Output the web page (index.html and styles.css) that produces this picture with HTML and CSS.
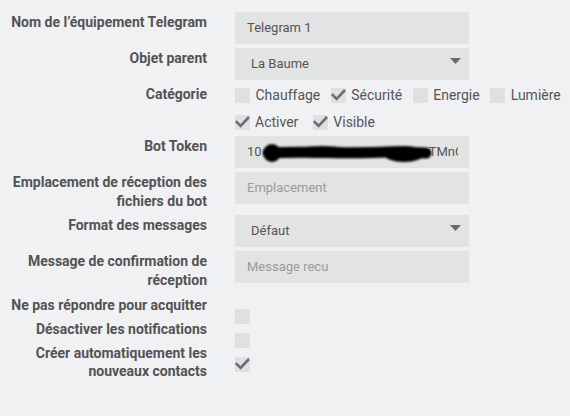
FILE: index.html
```html
<!DOCTYPE html>
<html lang="fr">
<head>
<meta charset="utf-8">
<title>Telegram</title>
<link rel="stylesheet" href="styles.css">
</head>
<body>
<div class="form">
  <div class="label">Nom de l’équipement Telegram</div>
  <div class="control"><div class="input">Telegram 1</div></div>

  <div class="label">Objet parent</div>
  <div class="control"><div class="input select"><span>La Baume</span><svg class="arrow" width="11" height="6" viewBox="0 0 11 6"><path d="M0 0H11L5.5 6Z" fill="#6a6a6a"/></svg></div></div>

  <div class="label">Catégorie</div>
  <div class="control">
    <div class="checks">
      <div class="check-line">
        <label class="opt"><span class="box"></span>Chauffage</label>
        <label class="opt"><span class="box"><svg class="tick" width="15" height="15" viewBox="0 0 15 15"><path d="M0.8 6.2L5.6 11L14 2" fill="none" stroke="#6c6c76" stroke-width="2.6"/></svg></span>Sécurité</label>
        <label class="opt"><span class="box"></span>Energie</label>
        <label class="opt"><span class="box"></span>Lumière</label>
      </div>
      <div class="check-line line2">
        <label class="opt"><span class="box"><svg class="tick" width="15" height="15" viewBox="0 0 15 15"><path d="M0.8 6.2L5.6 11L14 2" fill="none" stroke="#6c6c76" stroke-width="2.6"/></svg></span>Activer</label>
        <label class="opt"><span class="box"><svg class="tick" width="15" height="15" viewBox="0 0 15 15"><path d="M0.8 6.2L5.6 11L14 2" fill="none" stroke="#6c6c76" stroke-width="2.6"/></svg></span>Visible</label>
      </div>
    </div>
  </div>

  <div class="label">Bot Token</div>
  <div class="control"><div class="input token"><div class="token-text">10<svg class="blob" width="170" height="24" viewBox="0 0 170 24"><defs><filter id="bl" x="-10%" y="-50%" width="120%" height="200%"><feGaussianBlur stdDeviation="1.1"/></filter></defs><g filter="url(#bl)" fill="#000"><path d="M6 12 C40 10 90 13 125 11 C140 10 150 12 164 12" fill="none" stroke="#000" stroke-width="11" stroke-linecap="round"/><ellipse cx="10" cy="12" rx="9" ry="9"/><ellipse cx="142" cy="13" rx="20" ry="8"/><ellipse cx="60" cy="11" rx="30" ry="6"/></g></svg>TMnOq8Lz</div></div></div>

  <div class="label multi">Emplacement de réception des fichiers du bot</div>
  <div class="control"><div class="input placeholder">Emplacement</div></div>

  <div class="label">Format des messages</div>
  <div class="control"><div class="input select"><span>Défaut</span><svg class="arrow" width="11" height="6" viewBox="0 0 11 6"><path d="M0 0H11L5.5 6Z" fill="#6a6a6a"/></svg></div></div>

  <div class="label multi">Message de confirmation de réception</div>
  <div class="control"><div class="input placeholder">Message recu</div></div>

  <div class="label cblabel">Ne pas répondre pour acquitter</div>
  <div class="control cbcell"><span class="box"></span></div>

  <div class="label cblabel">Désactiver les notifications</div>
  <div class="control cbcell"><span class="box"></span></div>

  <div class="label cblabel">Créer automatiquement les nouveaux contacts</div>
  <div class="control cbcell"><span class="box"><svg class="tick" width="15" height="15" viewBox="0 0 15 15"><path d="M0.8 6.2L5.6 11L14 2" fill="none" stroke="#6c6c76" stroke-width="2.6"/></svg></span></div>
</div>
</body>
</html>
```

FILE: styles.css
```css
html, body {
  margin: 0;
  background: #f0f1f3;
}

body {
  font-family: Roboto, "Liberation Sans", Arial, sans-serif;
  color: #555;
  width: 570px;
  height: 416px;
  overflow: hidden;
}

.form {
  display: grid;
  grid-template-columns: 197px 234px;
  column-gap: 28px;
  row-gap: 4px;
  padding: 12px 0 0 10px;
  align-items: start;
}

.label {
  font-weight: 700;
  font-size: 14px;
  line-height: 18.5px;
  text-align: right;
  padding-top: 1px;
  color: #535353;
}

.label.multi {
  padding-bottom: 1px;
}

.label.cblabel {
  padding-top: 1.5px;
}

.control {
  min-width: 0;
}

.input {
  box-sizing: border-box;
  height: 32px;
  background: #e2e3e3;
  font-size: 13px;
  line-height: 32px;
  padding: 0 11px 0 12px;
  overflow: hidden;
  white-space: nowrap;
  color: #555;
}

.input.placeholder {
  color: #9b9b9b;
}

.input.select {
  display: flex;
  justify-content: space-between;
  align-items: flex-start;
  padding-left: 16px;
  padding-right: 8px;
}

.arrow {
  margin-top: 10px;
  flex-shrink: 0;
}

.input.token {
  display: flex;
  align-items: center;
}

.token-text {
  display: flex;
  align-items: center;
  flex: 1;
  min-width: 0;
  overflow: hidden;
}

.blob {
  flex-shrink: 0;
  margin-right: -3px;
  margin-top: 1px;
}

.checks {
  display: flex;
  flex-direction: column;
  gap: 12px;
  padding: 4px 0 2px;
}

.check-line {
  display: flex;
  align-items: center;
  white-space: nowrap;
}

.opt {
  display: flex;
  align-items: center;
  gap: 5.5px;
  margin-right: 10.5px;
  font-size: 14px;
  line-height: 15px;
  color: #555;
  flex-shrink: 0;
}

.line2 .opt {
  gap: 5px;
  margin-right: 15px;
}

.box {
  display: block;
  position: relative;
  width: 15px;
  height: 15px;
  background: #dfe0e0;
  flex-shrink: 0;
}

.tick {
  position: absolute;
  left: 0;
  top: 0;
  overflow: visible;
}

.cbcell {
  height: 0;
}

.cbcell .box {
  margin-top: 15px;
}
```
